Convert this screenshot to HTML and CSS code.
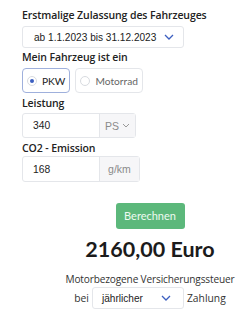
FILE: index.html
```html
<!DOCTYPE html>
<html>
	<head>
		<meta charset="UTF-8">
		<title>Kfz-Steuer</title>
		<link rel="stylesheet" href="styles.css">
	</head>
	<body>
		<div class="calc">
			<div class="lbl">Erstmalige Zulassung des Fahrzeuges</div>
			<div class="sel sel-date">
				<span>ab 1.1.2023 bis 31.12.2023</span>
				<svg class="chev" width="10" height="6" viewBox="0 0 10 6"><path d="M1 1l4 4 4-4" fill="none" stroke="#3c5fc0" stroke-width="1.3"/></svg>
			</div>

			<div class="lbl">Mein Fahrzeug ist ein</div>
			<div class="radios">
				<div class="radio on"><i></i>PKW</div>
				<div class="radio"><i></i>Motorrad</div>
			</div>

			<div class="lbl lbl-tight">Leistung</div>
			<div class="group g-ps">
				<div class="inp">340</div>
				<div class="addon">PS
					<svg width="8" height="5" viewBox="0 0 8 5"><path d="M1 1l3 3 3-3" fill="none" stroke="#999" stroke-width="1"/></svg>
				</div>
			</div>

			<div class="lbl lbl-tight">CO2 - Emission</div>
			<div class="group g-co">
				<div class="inp">168</div>
				<div class="addon">g/km</div>
			</div>

			<div class="result">
				<div class="btn">Berechnen</div>
				<div class="sum">2160,00 Euro</div>
				<div class="note">Motorbezogene Versicherungssteuer</div>
				<div class="pay">
					<span>bei</span>
					<div class="sel sel-pay">
						<span>jährlicher</span>
						<svg class="chev" width="10" height="6" viewBox="0 0 10 6"><path d="M1 1l4 4 4-4" fill="none" stroke="#3c5fc0" stroke-width="1.3"/></svg>
					</div>
					<span>Zahlung</span>
				</div>
			</div>
		</div>
	</body>
</html>
```

FILE: styles.css
```css
*{
	margin: 0;
	padding: 0;
	box-sizing: border-box;
}
body{
	background: #fff;
	color: #222;
	font-family: "Liberation Sans", Arial, sans-serif;
}
.calc{
	padding: 7px 0 0 22px;
}
.lbl{
	font-family: "Open Sans", "Noto Sans", sans-serif;
	font-weight: 600;
	font-size: 10.5px;
	line-height: 16px;
	color: #222;
	letter-spacing: -0.1px;
}
.lbl-tight{
	margin-top: 2px;
}
.sel{
	display: flex;
	align-items: center;
	justify-content: space-between;
	height: 22px;
	border: 1px solid #e4e6ea;
	border-radius: 3px;
	background: #fff;
	font-size: 10.1px;
	color: #222;
}
.sel-date{
	width: 162px;
	margin: 3px 0 1px;
	padding: 0 9px 0 11px;
}
.radios{
	display: flex;
	gap: 5px;
	margin-top: 3px;
}
.radio{
	display: flex;
	align-items: center;
	height: 25px;
	padding: 0 4px 0 4px;
	border: 1px solid #e4e6ea;
	border-radius: 4px;
	font-family: Lato, "Open Sans", sans-serif;
	font-size: 10.2px;
	color: #666;
	white-space: nowrap;
}
.radio i{
	flex-shrink: 0;
	width: 10px;
	height: 10px;
	border: 1px solid #d8dbe0;
	border-radius: 50%;
	margin-right: 5px;
	position: relative;
}
.radio.on{
	border-color: #9fb0dc;
	color: #222;
}
.radio.on i::after{
	content: "";
	position: absolute;
	left: 2px;
	top: 2px;
	width: 4px;
	height: 4px;
	border-radius: 50%;
	background: #3c5fc0;
}
.group{
	display: flex;
	height: 25px;
	margin-top: 2px;
	border: 1px solid #e4e6ea;
	border-radius: 3px;
}
.g-ps{
	width: 114px;
}
.g-co{
	width: 118px;
	height: 26px;
	margin-top: 0;
}
.inp{
	width: 77px;
	display: flex;
	align-items: center;
	padding-left: 10px;
	font-size: 10.3px;
	color: #222;
	border-right: 1px solid #e4e6ea;
}
.addon{
	flex: 1;
	display: flex;
	align-items: center;
	justify-content: center;
	gap: 3px;
	background: #f6f6f8;
	color: #8a8a8a;
	font-size: 10.5px;
}
.result{
	width: 200px;
	margin-left: 28px;
	display: flex;
	flex-direction: column;
	align-items: center;
	text-align: center;
}
.btn{
	margin-top: 21px;
	width: 69px;
	height: 26px;
	line-height: 26px;
	background: #5cb87b;
	border-radius: 3px;
	color: #eefaf1;
	font-family: Lato, "Open Sans", sans-serif;
	font-size: 11px;
}
.sum{
	margin-top: 6px;
	line-height: 28px;
	font-family: Lato, "Open Sans", sans-serif;
	font-weight: 700;
	font-size: 21.5px;
	color: #1b1b1b;
}
.note{
	margin-top: 8px;
	line-height: 16px;
	font-family: "Open Sans", "Noto Sans", sans-serif;
	font-size: 10.1px;
	color: #333;
	letter-spacing: -0.15px;
}
.pay{
	display: flex;
	align-items: center;
	gap: 3px;
	font-family: "Open Sans", "Noto Sans", sans-serif;
	font-size: 10.3px;
	color: #333;
}
.sel-pay{
	width: 92px;
	padding: 0 12px 0 9px;
	font-family: "Liberation Sans", Arial, sans-serif;
}
```
